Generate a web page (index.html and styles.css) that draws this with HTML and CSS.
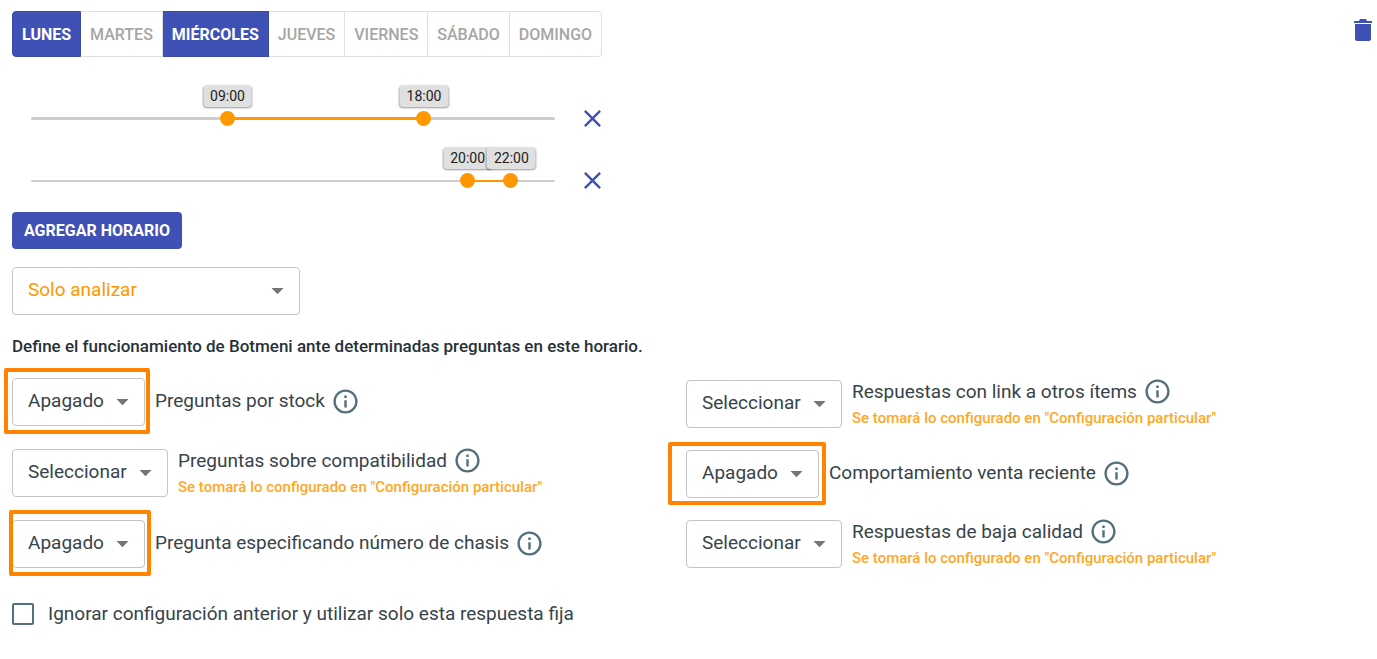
FILE: index.html
```html
<!DOCTYPE html>
<html lang="es">
<head>
<meta charset="utf-8">
<title>Configuración de horarios</title>
<link rel="stylesheet" href="styles.css">
</head>
<body>
<svg class="defs" aria-hidden="true">
  <symbol id="info" viewBox="0 0 24 24"><path d="M11 7h2v2h-2zm0 4h2v6h-2zm1-9C6.480 2 2 6.480 2 12s4.480 10 10 10 10-4.480 10-10S17.520 2 12 2zm0 18c-4.410 0-8-3.590-8-8s3.590-8 8-8 8 3.590 8 8-3.590 8-8 8z"/></symbol>
  <symbol id="close" viewBox="0 0 24 24"><path d="M19 6.410L17.590 5 12 10.590 6.410 5 5 6.410 10.590 12 5 17.590 6.410 19 12 13.410 17.590 19 19 17.590 13.410 12z"/></symbol>
  <symbol id="arrow" viewBox="0 0 24 24"><path d="M7 10l5 5 5-5z"/></symbol>
</svg>
<main class="panel">
  <header class="top">
    <div class="days" role="group" aria-label="Días">
      <button class="day active" aria-pressed="true">LUNES</button>
      <button class="day" aria-pressed="false">MARTES</button>
      <button class="day active" aria-pressed="true">MIÉRCOLES</button>
      <button class="day" aria-pressed="false">JUEVES</button>
      <button class="day" aria-pressed="false">VIERNES</button>
      <button class="day" aria-pressed="false">SÁBADO</button>
      <button class="day" aria-pressed="false">DOMINGO</button>
    </div>
    <button class="icon-button" aria-label="Eliminar">
      <svg class="trash" viewBox="0 0 18 22"><path d="M0 2h5l1-2h6l1 2h5v2H0zM1 5h16v15a2 2 0 0 1-2 2H3a2 2 0 0 1-2-2z"/></svg>
    </button>
  </header>

  <div class="schedules">
    <div class="schedule">
      <div class="slider">
        <div class="track">
          <span class="range" style="left:37.5%;right:25%"></span>
          <output class="bubble" style="left:37.5%">09:00</output>
          <output class="bubble" style="left:75%">18:00</output>
        </div>
        <input type="range" min="0" max="24" value="9" aria-label="Desde">
        <input type="range" min="0" max="24" value="18" aria-label="Hasta">
      </div>
      <button class="icon-button" aria-label="Quitar horario"><svg class="close"><use href="#close"/></svg></button>
    </div>
    <div class="schedule">
      <div class="slider thin">
        <div class="track">
          <span class="range" style="left:83.333%;right:8.333%"></span>
          <output class="bubble" style="left:83.333%">20:00</output>
          <output class="bubble" style="left:91.667%">22:00</output>
        </div>
        <input type="range" min="0" max="24" value="20" aria-label="Desde">
        <input type="range" min="0" max="24" value="22" aria-label="Hasta">
      </div>
      <button class="icon-button" aria-label="Quitar horario"><svg class="close"><use href="#close"/></svg></button>
    </div>
  </div>

  <button class="add">AGREGAR HORARIO</button>

  <div class="select mode">
    <select aria-label="Modo"><option>Solo analizar</option></select>
    <svg class="arrow"><use href="#arrow"/></svg>
  </div>

  <p class="intro">Define el funcionamiento de Botmeni ante determinadas preguntas en este horario.</p>

  <div class="options">
    <div class="column">
      <div class="option">
        <div class="select off"><select id="stock"><option>Apagado</option></select><svg class="arrow"><use href="#arrow"/></svg><span class="frame frame-stock"></span></div>
        <div class="text"><div class="line"><label for="stock">Preguntas por stock</label><svg class="info"><use href="#info"/></svg></div></div>
      </div>
      <div class="option hinted">
        <div class="select pick"><select id="compat"><option>Seleccionar</option></select><svg class="arrow"><use href="#arrow"/></svg></div>
        <div class="text"><div class="line"><label for="compat">Preguntas sobre compatibilidad</label><svg class="info"><use href="#info"/></svg></div>
        <span class="hint">Se tomará lo configurado en "Configuración particular"</span></div>
      </div>
      <div class="option">
        <div class="select off"><select id="chasis"><option>Apagado</option></select><svg class="arrow"><use href="#arrow"/></svg><span class="frame frame-chasis"></span></div>
        <div class="text"><div class="line"><label for="chasis">Pregunta especificando número de chasis</label><svg class="info"><use href="#info"/></svg></div></div>
      </div>
    </div>
    <div class="column second">
      <div class="option hinted">
        <div class="select pick"><select id="links"><option>Seleccionar</option></select><svg class="arrow"><use href="#arrow"/></svg></div>
        <div class="text"><div class="line"><label for="links">Respuestas con link a otros ítems</label><svg class="info"><use href="#info"/></svg></div>
        <span class="hint">Se tomará lo configurado en "Configuración particular"</span></div>
      </div>
      <div class="option">
        <div class="select off"><select id="venta"><option>Apagado</option></select><svg class="arrow"><use href="#arrow"/></svg><span class="frame frame-venta"></span></div>
        <div class="text"><div class="line"><label for="venta">Comportamiento venta reciente</label><svg class="info"><use href="#info"/></svg></div></div>
      </div>
      <div class="option hinted">
        <div class="select pick"><select id="calidad"><option>Seleccionar</option></select><svg class="arrow"><use href="#arrow"/></svg></div>
        <div class="text"><div class="line"><label for="calidad">Respuestas de baja calidad</label><svg class="info"><use href="#info"/></svg></div>
        <span class="hint">Se tomará lo configurado en "Configuración particular"</span></div>
      </div>
    </div>
  </div>

  <label class="ignore"><input type="checkbox"><span>Ignorar configuración anterior y utilizar solo esta respuesta fija</span></label>
</main>
</body>
</html>
```
FILE: styles.css
```css
* { box-sizing: border-box; }
body {
  margin: 0;
  background: #fff;
  color: #37434a;
  font: 400 19px/24px Roboto, sans-serif;
}
button, select { font-family: inherit; cursor: pointer; }
.defs { display: none; }
.panel { padding: 11px 5px 24px 12px; }

.top { display: flex; justify-content: space-between; align-items: flex-start; }
.days { display: flex; }
.day {
  height: 46px;
  padding: 0 9px;
  border: 1px solid #e0e0e0;
  border-left-width: 0;
  background: #fff;
  color: #a6a6a6;
  font-size: 16px;
  font-weight: 500;
}
.day:first-child { border-left-width: 1px; border-radius: 4px 0 0 4px; }
.day:last-child { border-radius: 0 4px 4px 0; }
.day.active { background: #3f51b5; border-color: #3949a8; color: #fff; font-weight: 700; }

.icon-button { display: flex; padding: 0; border: 0; background: none; }
.icon-button svg { fill: #3f51b5; }
.trash { width: 18px; height: 22px; margin-top: 8px; }
.close { width: 29px; height: 29px; }

.schedules { padding: 30px 0 0 11px; }
.schedule { display: flex; align-items: center; gap: 16px; height: 62px; }
.slider { position: relative; width: 539px; height: 29px; }
.track {
  position: absolute;
  top: 13px;
  left: 8px;
  right: 7px;
  height: 3px;
  border-radius: 2px;
  background: #cecece;
}
.range { position: absolute; top: 0; bottom: 0; background: #ff9800; }
.thin .track { top: 14px; height: 2px; }
.bubble {
  position: absolute;
  bottom: 13px;
  transform: translateX(-50%);
  padding: 0 7px;
  border-radius: 4px;
  background: #e0e0e0;
  box-shadow: 0 1px 2px rgba(0, 0, 0, .4);
  color: #212121;
  font-size: 14px;
  line-height: 22px;
}
.slider input {
  position: absolute;
  inset: 0;
  width: 100%;
  height: 100%;
  margin: 0;
  appearance: none;
  background: none;
  pointer-events: none;
}
.slider input::-webkit-slider-thumb {
  appearance: none;
  width: 15px;
  height: 15px;
  border-radius: 50%;
  background: #ff9800;
  pointer-events: auto;
}

.add {
  display: block;
  height: 37px;
  margin-top: 1px;
  padding: 0 12px;
  border: 0;
  border-radius: 4px;
  background: #3f51b5;
  color: #fff;
  font-size: 16px;
  font-weight: 700;
}

.select { position: relative; flex: none; height: 48px; }
.select select {
  width: 100%;
  height: 100%;
  padding: 0 32px 3px 15px;
  border: 1px solid #c4c4c4;
  border-radius: 4px;
  appearance: none;
  background: #fff;
  color: inherit;
  font-size: 19px;
}
.mode { width: 288px; margin-top: 18px; color: #ff9800; }
.off { width: 133px; }
.pick { width: 156px; }
.arrow {
  position: absolute;
  top: 9px;
  right: 8px;
  width: 29px;
  height: 29px;
  fill: #757575;
  pointer-events: none;
}
.frame { position: absolute; border: 4px solid #ff8300; border-radius: 2px; pointer-events: none; }
.frame-stock { inset: -10px -5px -8px -8px; }
.frame-chasis { inset: -10px -6px -8px -3px; }
.frame-venta { inset: -8px -7px -7px -18px; }

.intro { margin: 19px 0; color: #263238; font-size: 17px; font-weight: 500; }

.options { display: grid; grid-template-columns: 1fr 1fr; padding-right: 12px; margin-top: 20px; }
.column { display: flex; flex-direction: column; gap: 23px; }
.second { padding-top: 2px; gap: 22px; }
.option { display: flex; align-items: center; gap: 10px; height: 48px; }
.hinted { align-items: flex-start; }
.line { display: flex; align-items: center; gap: 6px; }
.info { width: 29px; height: 29px; fill: #546e7a; }
.text { padding-bottom: 2px; }
.hinted .text { margin-top: -3px; }
.hint { display: block; color: #ffa726; font-size: 15px; font-weight: 500; line-height: 24px; }

.ignore { display: flex; align-items: center; gap: 14px; width: max-content; margin-top: 34px; }
.ignore input {
  appearance: none;
  width: 22px;
  height: 22px;
  margin: 0;
  border: 2px solid #546e7a;
  border-radius: 2px;
}
```
